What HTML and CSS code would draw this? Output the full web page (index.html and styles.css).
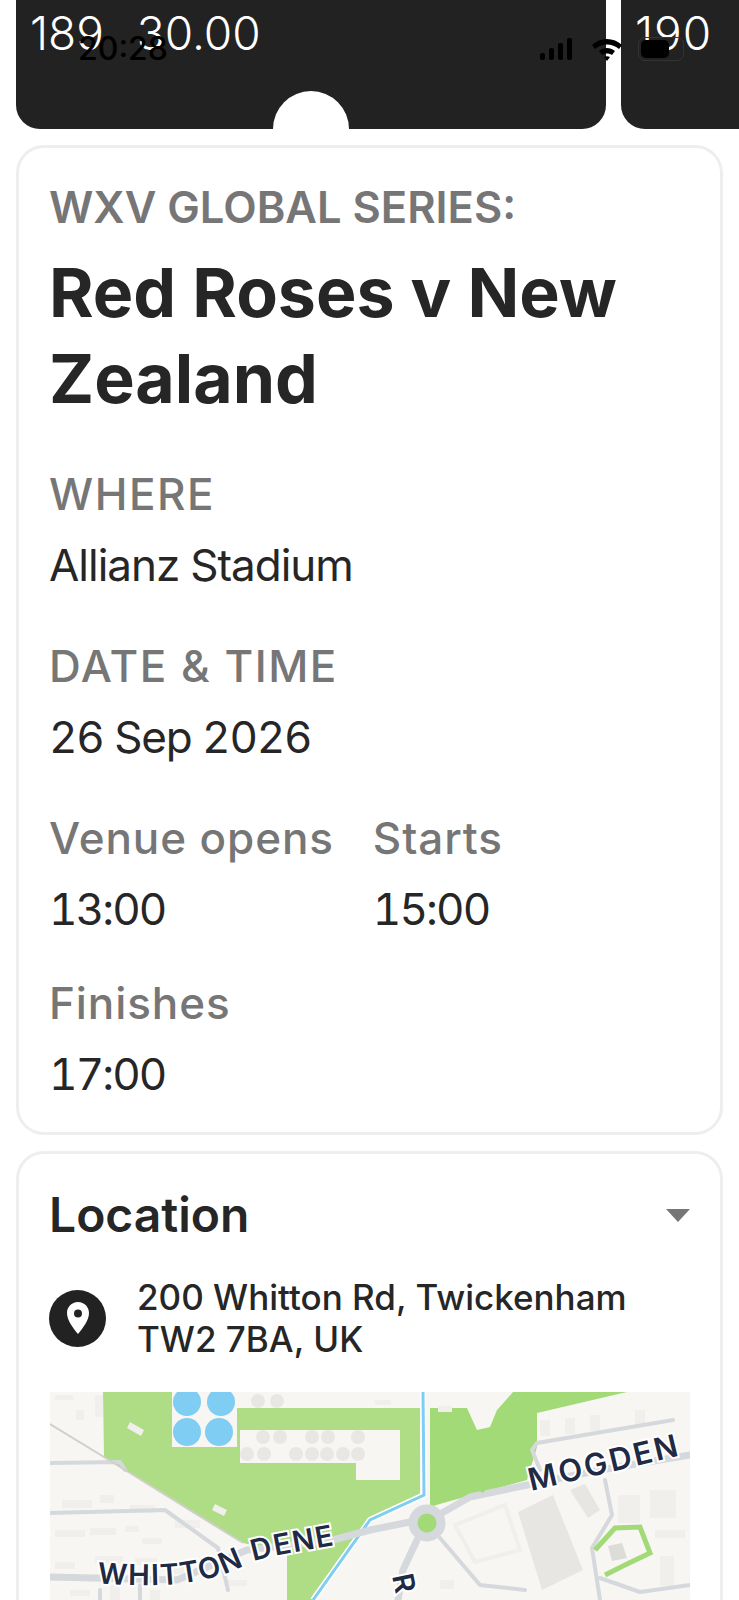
FILE: index.html
```html
<!DOCTYPE html>
<html>
	<head>
		<meta charset="utf-8" />
		<title>Red Roses v New Zealand</title>
		<link rel="stylesheet" href="styles.css">
	</head>
	<body>
	<div class="status">
		<span class="clock">20:28</span>
		<div class="status-icons">
			<svg width="36" height="22" viewBox="0 0 36 22"><rect x="0" y="15" width="5" height="7" rx="2"/><rect x="9" y="10" width="5" height="12" rx="2"/><rect x="18" y="5" width="5" height="17" rx="2"/><rect x="27" y="0" width="5" height="22" rx="2"/></svg>
			<svg width="32" height="24" viewBox="0 0 32 24"><path d="M1 8c8-8 22-8 30 0l-3 4C21 6 11 6 4 12z"/><path d="M8 14c5-4 11-4 16 0l-3 4c-3-2-7-2-10 0z"/><path d="M13 20c2-1 4-1 6 0l-3 4z"/></svg>
			<div class="battery"><div class="battery-fill"></div></div>
		</div>
	</div>

	<div class="tiles">
		<div class="tile tile-main">
			<span class="tile-num">189</span>
			<span class="tile-price">30.00</span>
			<div class="notch"></div>
		</div>
		<div class="tile tile-next">
			<span class="tile-num">190</span>
		</div>
	</div>

	<section class="card card-details">
		<p class="kicker">WXV GLOBAL SERIES:</p>
		<h1>Red Roses v New Zealand</h1>
		<div class="field field-first">
			<p class="label label-caps">WHERE</p>
			<p class="value">Allianz Stadium</p>
		</div>
		<div class="field">
			<p class="label label-caps">DATE &amp; TIME</p>
			<p class="value value-date">26 Sep 2026</p>
		</div>
		<div class="times">
			<div class="field">
				<p class="label">Venue opens</p>
				<p class="value value-time">13:00</p>
			</div>
			<div class="field">
				<p class="label">Starts</p>
				<p class="value value-time">15:00</p>
			</div>
		</div>
		<div class="field field-tight">
			<p class="label">Finishes</p>
			<p class="value value-time">17:00</p>
		</div>
	</section>

	<section class="card card-location">
		<div class="location-head">
			<h2>Location</h2>
			<div class="caret"></div>
		</div>
		<div class="address">
			<div class="pin">
				<svg width="24" height="34" viewBox="0 0 24 34"><path fill="#fff" fill-rule="evenodd" d="M12 1C5.500 1 1 6 1 12c0 7 6 15 11 21 5-6 11-14 11-21C23 6 18.500 1 12 1zm0 7.500a4 4 0 1 1 0 8 4 4 0 0 1 0-8z"/></svg>
			</div>
			<p>200 Whitton Rd, Twickenham<br>TW2 7BA, UK</p>
		</div>
		<svg class="map" viewBox="50 1392 640 208" width="640" height="208">
			<rect x="50" y="1392" width="640" height="208" fill="#f8f6f2"/>

			<!-- parks -->
			<path fill="#aedd85" d="M103 1392L172 1392L172 1447L237 1447L237 1408L420 1408L420 1495L370 1520L313 1600L287 1600L287 1553L243 1543L104 1457z"/>
			<path fill="#a3da78" d="M430 1408L467 1408L477 1430L490 1427L497 1410L513 1392L627 1392L537 1413L537 1447L527 1480L443 1503L430 1507z"/>
			<path fill="#f8f6f2" d="M172 1392H237V1447H172zM240 1430H400V1480H356V1463H240zM237 1392H420V1408H237z"/>

			<!-- tanks -->
			<g fill="#7fcdf3">
				<circle cx="187" cy="1402" r="14"/><circle cx="221" cy="1402" r="14"/>
				<circle cx="187" cy="1432" r="14"/><circle cx="219" cy="1432" r="14"/>
			</g>
			<g fill="#e8e7e4">
				<circle cx="258" cy="1401" r="7"/><circle cx="277" cy="1401" r="7"/>
				<circle cx="263" cy="1437" r="7"/><circle cx="280" cy="1437" r="7"/><circle cx="312" cy="1437" r="7"/><circle cx="328" cy="1437" r="7"/><circle cx="358" cy="1437" r="7"/>
				<circle cx="247" cy="1454" r="7"/><circle cx="264" cy="1454" r="7"/><circle cx="296" cy="1454" r="7"/><circle cx="312" cy="1454" r="7"/><circle cx="327" cy="1454" r="7"/><circle cx="343" cy="1454" r="7"/><circle cx="358" cy="1454" r="7"/>
			</g>

			<!-- buildings -->
			<g fill="#f0efec">
				<rect x="55" y="1395" width="18" height="5"/><rect x="76" y="1410" width="8" height="10"/><rect x="95" y="1395" width="8" height="22"/>
				<rect x="62" y="1500" width="30" height="8"/><rect x="100" y="1495" width="14" height="8"/><rect x="130" y="1505" width="25" height="8"/><rect x="175" y="1520" width="25" height="8"/>
				<rect x="55" y="1530" width="30" height="7"/><rect x="90" y="1528" width="26" height="7"/><rect x="125" y="1526" width="14" height="6"/><rect x="142" y="1538" width="20" height="6"/>
				<rect x="55" y="1562" width="20" height="7"/><rect x="95" y="1556" width="28" height="7"/><rect x="135" y="1558" width="22" height="7"/><rect x="170" y="1562" width="14" height="12"/>
				<rect x="70" y="1590" width="20" height="6"/><rect x="110" y="1585" width="10" height="15"/><rect x="150" y="1590" width="10" height="10"/><rect x="225" y="1580" width="22" height="6"/>
				<rect x="438" y="1406" width="14" height="6"/><rect x="375" y="1400" width="16" height="5"/>
				<rect x="540" y="1420" width="10" height="16"/><rect x="565" y="1418" width="10" height="16"/><rect x="590" y="1415" width="10" height="16"/><rect x="635" y="1410" width="10" height="16"/>
				<rect x="618" y="1495" width="22" height="28"/><rect x="650" y="1490" width="26" height="28"/><rect x="655" y="1530" width="30" height="8"/><rect x="660" y="1556" width="14" height="30"/>
				<rect x="440" y="1580" width="14" height="9"/>
				<path d="M130 1422l14 8-3 6-14-8zM215 1504l12 6-3 6-12-6z"/>
			</g>
			<path fill="#e7e6e3" d="M518 1512L553 1495L583 1570L542 1590zM570 1490L585 1484L600 1510L588 1518z"/>
			<path fill="none" stroke="#f0efec" stroke-width="4" d="M455 1525L505 1505L520 1550L475 1562z"/>

			<!-- river -->
			<path fill="none" stroke="#fff" stroke-width="6" d="M423 1392L424 1495L370 1520L313 1600"/>
			<path fill="none" stroke="#7fcdf3" stroke-width="3" d="M423 1392L424 1495L370 1520L313 1600"/>

			<!-- roads -->
			<g fill="none" stroke="#d5d8dc" stroke-linecap="round" stroke-linejoin="round">
				<path stroke-width="7" d="M442 1513L470 1497L527 1485L600 1470L690 1455"/>
				<path stroke-width="7" d="M410 1522L370 1530L333 1540L247 1550L177 1580L50 1577"/>
				<path stroke-width="7" d="M417 1540L403 1570L398 1600"/>
				<path stroke-width="4" d="M540 1470L532 1450L537 1443L673 1420"/>
				<path stroke-width="4" d="M605 1480L612 1515L592 1548L600 1600"/>
				<path stroke-width="4" d="M440 1538L480 1585L525 1590"/>
				<path stroke-width="4" d="M50 1513L165 1510L218 1548L228 1590"/>
				<path stroke-width="4" d="M50 1463L120 1462L125 1470"/>
				<path stroke-width="4" d="M100 1590V1600M140 1585V1600"/>
				<path stroke-width="4" d="M600 1578L640 1592L690 1585"/>
			</g>
			<path fill="none" stroke="#cfcfcb" stroke-width="2" d="M50 1424L104 1457L243 1543"/>

			<!-- roundabout -->
			<circle cx="427" cy="1523" r="14" fill="#a3da78" stroke="#d5d8dc" stroke-width="9"/>

			<!-- small park -->
			<path fill="none" stroke="#a3da78" stroke-width="5" d="M595 1550L615 1528L640 1527L650 1553L625 1565L605 1575"/>
			<path fill="#dcdcd9" d="M608 1546L622 1543L627 1558L612 1561z"/>
			<path fill="#a3da78" d="M478 1490l7-8 4 3-6 8z"/>

			<!-- labels -->
			<path id="whitton" fill="none" d="M97 1583C150 1587 200 1588 245 1565C262 1556 300 1552 340 1544"/>
			<path id="mogden" fill="none" d="M531 1491L695 1452"/>
			<text class="map-label"><textPath href="#whitton">WHITTON DENE</textPath></text>
			<text class="map-label map-label-big"><textPath href="#mogden">MOGDEN</textPath></text>
			<text class="map-label" transform="translate(392 1576) rotate(78)">R</text>
		</svg>
	</section>
	</body>
</html>
```

FILE: styles.css
```css
*{
	box-sizing: border-box;
}
html,body{
	margin: 0;
	height: 1600px;
	overflow: hidden;
}
body{
	position: relative;
	width: 739px;
	background-color: white;
	font-family: Inter, "Liberation Sans", sans-serif;
	color: #262626;
}
p,h1,h2{
	margin: 0;
}

.status{
	position: absolute;
	z-index: 2;
	top: 31px;
	left: 78px;
	width: 606px;
	display: flex;
	justify-content: space-between;
	align-items: center;
	color: black;
}
.clock{
	font-size: 32px;
	line-height: 36px;
	font-weight: 500;
}
.status-icons{
	display: flex;
	align-items: center;
	gap: 15px;
}
.battery{
	width: 46px;
	height: 24px;
	padding: 2px;
	border: 1px solid #333;
	border-radius: 7px;
}
.battery-fill{
	width: 28px;
	height: 100%;
	background-color: black;
	border-radius: 5px;
}

.tiles{
	display: flex;
	gap: 15px;
	padding-left: 16px;
	height: 129px;
	margin-bottom: 16px;
	overflow: hidden;
}
.tile{
	position: relative;
	flex: none;
	height: 129px;
	padding: 7px 14px 0;
	background-color: #222222;
	color: white;
	font-size: 46px;
	line-height: 52px;
	font-weight: 300;
	border-radius: 0 0 24px 24px;
}
.tile-main{
	width: 590px;
}
.tile-next{
	width: 140px;
	letter-spacing: 1px;
}
.tile-price{
	margin-left: 20px;
}
.notch{
	position: absolute;
	left: 257px;
	top: 91px;
	width: 76px;
	height: 76px;
	border-radius: 50%;
	background-color: white;
}

.card{
	width: 707px;
	margin-left: 16px;
	padding: 34px 30px 0;
	border: 3px solid #eeeeee;
	border-radius: 28px;
	background-color: white;
}
.card-details{
	padding-bottom: 33px;
}
.card-location{
	margin-top: 16px;
	padding-top: 33px;
	height: 600px;
}
.kicker{
	font-size: 43.5px;
	line-height: 50px;
	font-weight: 600;
	color: #767676;
}
h1{
	margin-top: 17px;
	font-size: 68px;
	line-height: 86px;
	font-weight: 700;
}
.field{
	margin-top: 51px;
}
.field-first{
	margin-top: 48px;
}
.field-tight{
	margin-top: 44px;
}
.label{
	font-size: 44px;
	line-height: 50px;
	font-weight: 500;
	color: #767676;
	letter-spacing: 0.9px;
}
.label-caps{
	letter-spacing: 1.5px;
}
.value{
	margin-top: 21px;
	font-size: 44px;
	line-height: 50px;
	font-weight: 400;
	color: #262626;
	letter-spacing: -1px;
	font-variant-numeric: tabular-nums;
}
.value-date{
	letter-spacing: -1.2px;
}
.value-time{
	letter-spacing: -1.9px;
}
.times{
	display: flex;
	gap: 39px;
}

.location-head{
	display: flex;
	justify-content: space-between;
	align-items: center;
}
h2{
	font-size: 48px;
	line-height: 56px;
	font-weight: 600;
}
.caret{
	width: 0;
	height: 0;
	margin-right: 0;
	border-left: 12px solid transparent;
	border-right: 12px solid transparent;
	border-top: 13px solid #767676;
}
.address{
	display: flex;
	align-items: center;
	gap: 31px;
	margin-top: 33px;
}
.address p{
	font-size: 35px;
	line-height: 42px;
	font-weight: 500;
}
.pin{
	flex: none;
	width: 57px;
	height: 57px;
	border-radius: 50%;
	background-color: #222222;
	display: flex;
	justify-content: center;
	align-items: center;
}
.map{
	display: block;
	margin-top: 32px;
	margin-left: 1px;
}
.map-label{
	font-size: 29px;
	font-weight: 600;
	letter-spacing: 1.5px;
	fill: #1f2a44;
	stroke: white;
	stroke-width: 4px;
	paint-order: stroke;
}
.map-label-big{
	font-size: 31px;
	letter-spacing: 2.5px;
}
```
